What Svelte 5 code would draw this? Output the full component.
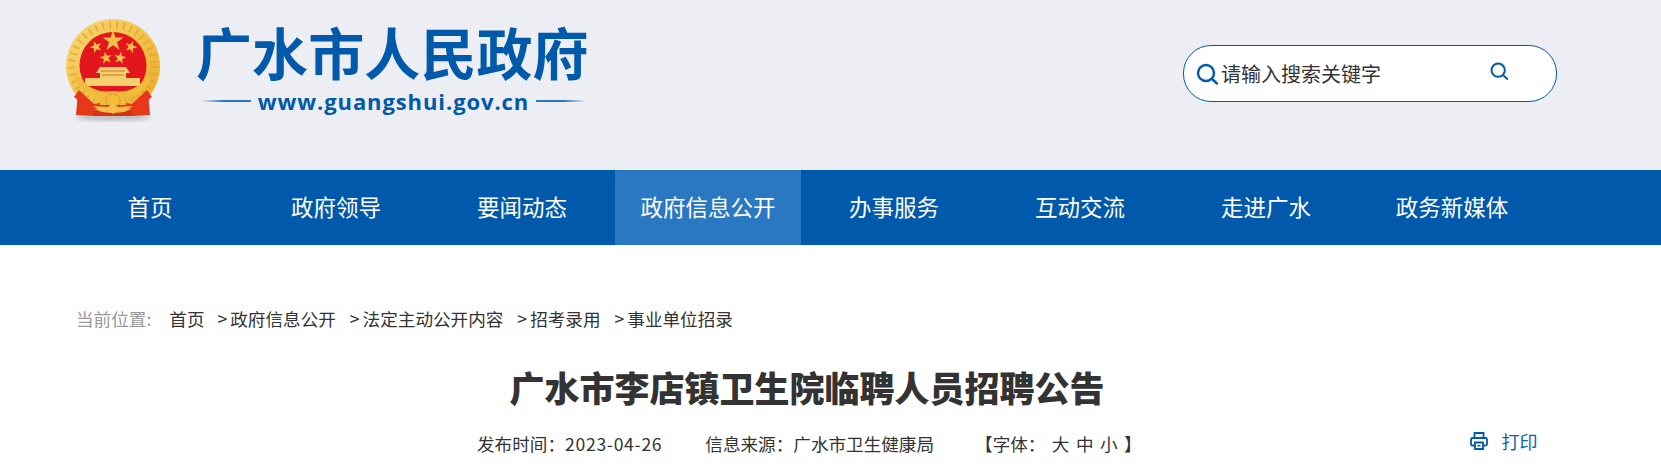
<script>
  let navs = ['首页', '政府领导', '要闻动态', '政府信息公开', '办事服务', '互动交流', '走进广水', '政务新媒体']
  let crumbs = ['政府信息公开', '法定主动公开内容', '招考录用', '事业单位招录']
  let star = (cx, cy, r, rot = 0) => {
    let pts = []
    for (let i = 0; i < 10; i++) {
      let a = ((rot - 90 + i * 36) * Math.PI) / 180
      let d = i % 2 ? r * 0.38 : r
      pts.push((cx + d * Math.cos(a)).toFixed(1) + ',' + (cy + d * Math.sin(a)).toFixed(1))
    }
    return pts.join(' ')
  }
</script>

<div class="page">
  <header class="head">
    <svg class="emblem" viewBox="0 0 106 106" width="106" height="106">
      <defs>
        <linearGradient id="gold" x1="0" y1="0" x2="1" y2="1">
          <stop offset="0" stop-color="#f8d878" />
          <stop offset="0.55" stop-color="#f2c044" />
          <stop offset="1" stop-color="#e8a82a" />
        </linearGradient>
        <filter id="soft"><feGaussianBlur stdDeviation="0.5" /></filter>
        <filter id="blur"><feGaussianBlur stdDeviation="2.500" /></filter>
      </defs>
      <ellipse cx="53" cy="100" rx="38" ry="3.500" fill="#8c8c8c" opacity="0.55" filter="url(#blur)" />
      <g filter="url(#soft)">
        <path d="M18 74 L16 98 L34 99 L36 84 Z M88 74 L90 98 L72 99 L70 84 Z" fill="#e23a1c" />
        <path d="M34 92 H72 V99 H34 Z" fill="#d92d18" />
        <circle cx="53" cy="49" r="47" fill="url(#gold)" />
        <circle cx="53" cy="49" r="41" fill="none" stroke="#d9992a" stroke-width="7" stroke-dasharray="2 5" opacity="0.55" />
        <circle cx="53" cy="48.500" r="33.500" fill="#e2141c" />
        <polygon points={star(53, 24, 11)} fill="#f4c046" />
        <polygon points={star(36, 30, 6.500, -20)} fill="#f4c046" />
        <polygon points={star(71, 30, 6.500, 20)} fill="#f4c046" />
        <polygon points={star(46, 41, 6.500, -10)} fill="#f4c046" />
        <polygon points={star(60, 41, 6.500, 10)} fill="#f4c046" />
        <path d="M40 50 H66 L70 56 H66 V61 H80 V69 H25 V61 H40 V56 H36 Z" fill="#f4cf6e" />
        <path d="M41 54 H65 M42 58 H64" stroke="#c9762a" stroke-width="1" />
        <path d="M25 69 H81 L76 72 H30 Z" fill="#e2141c" />
        <path d="M14 60 Q24 84 53 80 Q82 84 92 60 L88 58 Q76 77 53 74 Q30 77 18 58 Z" fill="#f2bc3a" />
        <path d="M19 73 L34 87 L53 84 L72 87 L87 73 L92 80 L76 92 H30 L14 80 Z" fill="#e8341c" />
        <path d="M40 88 A13 13 0 0 1 66 88 Z" fill="#f2bc3a" />
        <circle cx="53" cy="84" r="7" fill="none" stroke="#c9762a" stroke-width="1" stroke-dasharray="1.500 1.500" />
        <path d="M33 89 L48 90 L53 86 L58 90 L73 89 L64 95 L58 93 L53 97 L48 93 L42 95 Z" fill="#f4c046" />
      </g>
    </svg>
    <div class="brand">
      <div class="cn">广水市人民政府</div>
      <div class="url">
        <span class="rule left"></span>
        <span>www.guangshui.gov.cn</span>
        <span class="rule right"></span>
      </div>
    </div>
    <div class="search">
      <svg class="glass" viewBox="0 0 24 24" width="24" height="24">
        <circle cx="11" cy="11" r="8" fill="none" stroke="#0059aa" stroke-width="2.400" />
        <path d="M17 17 L22 21.500" stroke="#0059aa" stroke-width="2.400" stroke-linecap="round" />
      </svg>
      <span class="hint">请输入搜索关键字</span>
      <svg class="glass2" viewBox="0 0 24 24" width="20" height="20">
        <circle cx="11" cy="11" r="8" fill="none" stroke="#0059aa" stroke-width="2.400" />
        <path d="M17 17 L22 21.500" stroke="#0059aa" stroke-width="2.400" stroke-linecap="round" />
      </svg>
    </div>
  </header>

  <nav class="nav">
    {#each navs as n, i}
      <div class="item" class:active={i === 3}>{n}</div>
    {/each}
  </nav>

  <div class="crumbs">
    <span class="here">当前位置:</span>
    <span class="home">首页</span>
    {#each crumbs as c}
      <span class="crumb"><span class="arrow">&gt;</span>{c}</span>
    {/each}
  </div>

  <h1 class="title">广水市李店镇卫生院临聘人员招聘公告</h1>

  <div class="meta">
    <div class="info">
      <span>发布时间：<span class="date">2023-04-26</span></span>
      <span>信息来源：广水市卫生健康局</span>
      <span class="font-size">【字体：&nbsp;大 中 小 】</span>
    </div>
    <div class="print">
      <svg viewBox="0 0 18 18" width="18" height="18">
        <path d="M4.500 6 V1 H13.500 V6" fill="none" stroke="#0059aa" stroke-width="1.800" />
        <path d="M4.500 13.500 H2.500 Q1 13.500 1 12 V7.500 Q1 6 2.500 6 H15.500 Q17 6 17 7.500 V12 Q17 13.500 15.500 13.500 H13.500" fill="none" stroke="#0059aa" stroke-width="1.800" />
        <path d="M5 10.500 H13 V17 H5 Z" fill="none" stroke="#0059aa" stroke-width="1.800" />
        <path d="M7.500 13.700 H10.500" stroke="#0059aa" stroke-width="1.500" />
      </svg>
      <span>打印</span>
    </div>
  </div>
</div>

<style>
  :global(body) {
    margin: 0;
    background: #fff;
    overflow: hidden;
  }

  .page {
    font-family: "Noto Sans CJK SC", "Noto Sans", sans-serif;
    color: #333;
    width: 1661px;
  }

  .head {
    height: 170px;
    background: #eceef3;
    display: flex;
    align-items: flex-start;
    padding-left: 60px;
    box-sizing: border-box;
  }

  .emblem {
    margin-top: 17px;
    flex: none;
  }

  .brand {
    margin-left: 30px;
    margin-top: 18px;
    width: 390px;
    color: #0059aa;
  }

  .cn {
    font-size: 56px;
    font-weight: 700;
    line-height: 66px;
    letter-spacing: 0.1px;
    white-space: nowrap;
  }

  .url {
    display: flex;
    align-items: center;
    gap: 7px;
    font-family: "Open Sans", sans-serif;
    font-size: 22px;
    font-weight: 700;
    line-height: 30px;
    letter-spacing: 0.9px;
    padding-left: 5px;
    margin-top: 2px;
  }

  .rule {
    height: 2px;
    flex: 1;
  }

  .rule.left {
    background: linear-gradient(90deg, transparent, #2a78c2 45%);
  }

  .rule.right {
    background: linear-gradient(90deg, #2a78c2 55%, transparent);
  }

  .search {
    margin-left: 597px;
    margin-top: 45px;
    width: 374px;
    height: 57px;
    box-sizing: border-box;
    border: 1px solid #0059aa;
    border-radius: 28px;
    background: #fff;
    display: flex;
    align-items: center;
    padding-left: 11px;
    font-size: 20px;
  }

  .glass {
    flex: none;
  }

  .hint {
    margin-left: 2px;
    width: 268px;
    color: #333;
  }

  .glass2 {
    margin-top: -6px;
  }

  .nav {
    height: 75px;
    background: #0059aa;
    display: flex;
    padding-left: 57px;
  }

  .item {
    width: 186px;
    text-align: center;
    color: #fff;
    font-size: 22.5px;
    line-height: 73px;
    height: 75px;
  }

  .item.active {
    background: #2a78c2;
  }

  .crumbs {
    margin-top: 59px;
    padding-left: 76px;
    display: flex;
    font-size: 17.6px;
    line-height: 30px;
    color: #333;
  }

  .here {
    color: #999;
    margin-right: 18px;
  }

  .home {
    margin-right: 13px;
  }

  .crumb {
    margin-right: 14px;
  }

  .arrow {
    margin-right: 3px;
  }

  .title {
    width: 1614px;
    margin: 28px 0 0;
    text-align: center;
    font-size: 35px;
    font-weight: 900;
    line-height: 50px;
    color: #333;
  }

  .meta {
    margin-top: 14px;
    display: flex;
    align-items: center;
    font-size: 17.6px;
    line-height: 30px;
    padding-left: 477px;
  }

  .info {
    display: flex;
    gap: 43px;
  }

  .date {
    letter-spacing: 0.7px;
  }

  .font-size {
    word-spacing: 2.5px;
    margin-left: -2px;
  }

  .print {
    margin-left: 328px;
    margin-bottom: 6px;
    display: flex;
    align-items: center;
    gap: 14px;
    color: #0b62b0;
    font-size: 18px;
  }
</style>
